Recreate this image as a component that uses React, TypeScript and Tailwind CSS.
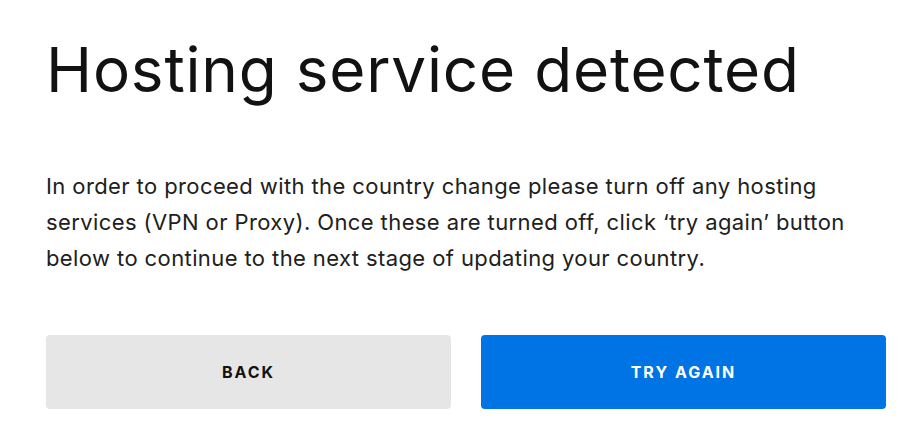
export default function App() {
  return (
    <div className="min-h-screen w-full bg-white px-[46px] pt-[30px]" style={{ fontFamily: 'Inter, "Noto Sans", sans-serif' }}>
      <h1 className="text-[62px] leading-[80px] font-normal text-[#121212] tracking-[0.8px]">
        Hosting service detected
      </h1>
      <p className="mt-[58px] w-[820px] text-[22px] leading-[36px] tracking-[0.4px] text-[#202020]">
        In order to proceed with the country change please turn off any hosting services (VPN or Proxy). Once these are turned off, click ‘try again’ button below to continue to the next stage of updating your country.
      </p>
      <div className="mt-[59px] flex w-[840px] gap-[30px]">
        <button className="flex h-[74px] flex-1 items-center justify-center rounded bg-[#e6e6e6] text-[16px] font-bold tracking-[2px] text-[#121212]">
          BACK
        </button>
        <button className="flex h-[74px] flex-1 items-center justify-center rounded bg-[#0074e4] text-[16px] font-bold tracking-[2px] text-white">
          TRY AGAIN
        </button>
      </div>
    </div>
  )
}
